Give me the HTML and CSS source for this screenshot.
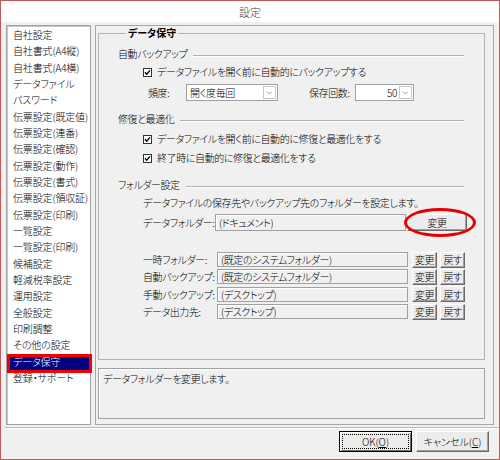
FILE: index.html
```html
<!DOCTYPE html>
<html lang="ja">
<head>
<meta charset="utf-8">
<title>設定</title>
<link rel="stylesheet" href="styles.css">
</head>
<body>
<div class="window">
  <div class="titlebar">設定</div>
  <div class="client">
    <div class="main">
      <ul class="nav">
        <li>自社設定</li>
        <li>自社書式(A4縦)</li>
        <li>自社書式(A4横)</li>
        <li>データファイル</li>
        <li>パスワード</li>
        <li>伝票設定(既定値)</li>
        <li>伝票設定(連番)</li>
        <li>伝票設定(確認)</li>
        <li>伝票設定(動作)</li>
        <li>伝票設定(書式)</li>
        <li>伝票設定(領収証)</li>
        <li>伝票設定(印刷)</li>
        <li>一覧設定</li>
        <li>一覧設定(印刷)</li>
        <li>候補設定</li>
        <li>軽減税率設定</li>
        <li>運用設定</li>
        <li>全般設定</li>
        <li>印刷調整</li>
        <li>その他の設定</li>
        <li class="selected">データ保守</li>
        <li>登録・サポート</li>
      </ul>
      <div class="pane">
        <fieldset class="group">
          <legend>データ保守</legend>
          <div class="heading h-backup"><span>自動バックアップ</span><i class="rule"></i></div>
          <div class="check c-backup"><svg class="box" width="9" height="9" viewBox="0 0 9 9"><rect x="0.5" y="0.5" width="8" height="8" fill="#fff" stroke="#333"/><polyline points="2,4.3 3.7,6.2 7,2.4" fill="none" stroke="#000" stroke-width="1.4"/></svg><span>データファイルを開く前に自動的にバックアップする</span></div>
          <div class="freq">
            <span class="lbl-freq">頻度:</span>
            <div class="combo combo-freq"><span class="val">開く度毎回</span><svg class="drop" width="13" height="13" viewBox="0 0 13 13"><rect x="0.5" y="0.5" width="12" height="12" fill="#fff" stroke="#c8c8c8"/><polyline points="4,5.5 6.5,8 9,5.5" fill="none" stroke="#9aa4b0" stroke-width="1"/></svg></div>
            <span class="lbl-count">保存回数:</span>
            <div class="combo combo-count"><span class="val num">50</span><svg class="drop" width="13" height="13" viewBox="0 0 13 13"><rect x="0.5" y="0.5" width="12" height="12" fill="#fff" stroke="#c8c8c8"/><polyline points="4,5.5 6.5,8 9,5.5" fill="none" stroke="#9aa4b0" stroke-width="1"/></svg></div>
          </div>
          <div class="heading h-repair"><span>修復と最適化</span><i class="rule"></i></div>
          <div class="check c-repair1"><svg class="box" width="9" height="9" viewBox="0 0 9 9"><rect x="0.5" y="0.5" width="8" height="8" fill="#fff" stroke="#333"/><polyline points="2,4.3 3.7,6.2 7,2.4" fill="none" stroke="#000" stroke-width="1.4"/></svg><span>データファイルを開く前に自動的に修復と最適化をする</span></div>
          <div class="check c-repair2"><svg class="box" width="9" height="9" viewBox="0 0 9 9"><rect x="0.5" y="0.5" width="8" height="8" fill="#fff" stroke="#333"/><polyline points="2,4.3 3.7,6.2 7,2.4" fill="none" stroke="#000" stroke-width="1.4"/></svg><span>終了時に自動的に修復と最適化をする</span></div>
          <div class="heading h-folder"><span>フォルダー設定</span><i class="rule"></i></div>
          <div class="note">データファイルの保存先やバックアップ先のフォルダーを設定します。</div>
          <div class="datafolder">
            <span class="lbl-df">データフォルダー:</span>
            <div class="field field-df">(ドキュメント)</div>
            <div class="circled"><button class="btn btn-df">変更</button></div>
          </div>
          <div class="folders">
            <div class="frow">
              <span class="lbl-f">一時フォルダー:</span>
              <div class="field field-f">(既定のシステムフォルダー)</div>
              <button class="btn btn-s">変更</button>
              <button class="btn btn-s">戻す</button>
            </div>
            <div class="frow">
              <span class="lbl-f">自動バックアップ:</span>
              <div class="field field-f">(既定のシステムフォルダー)</div>
              <button class="btn btn-s">変更</button>
              <button class="btn btn-s">戻す</button>
            </div>
            <div class="frow">
              <span class="lbl-f">手動バックアップ:</span>
              <div class="field field-f">(デスクトップ)</div>
              <button class="btn btn-s">変更</button>
              <button class="btn btn-s">戻す</button>
            </div>
            <div class="frow">
              <span class="lbl-f">データ出力先:</span>
              <div class="field field-f">(デスクトップ)</div>
              <button class="btn btn-s">変更</button>
              <button class="btn btn-s">戻す</button>
            </div>
          </div>
        </fieldset>
        <div class="desc">データフォルダーを変更します。</div>
      </div>
    </div>
    <div class="footer">
      <button class="btn btn-foot btn-ok"><span>OK(<u>O</u>)</span></button>
      <button class="btn btn-foot">キャンセル(<u>C</u>)</button>
    </div>
  </div>
</div>
</body>
</html>
```

FILE: styles.css
```css
html, body {
  margin: 0;
  padding: 0;
}

body {
  width: 500px;
  height: 460px;
  overflow: hidden;
  font-family: "Noto Sans CJK JP", "Noto Sans", sans-serif;
  font-size: 10px;
  font-weight: 300;
  font-feature-settings: "palt";
  color: #000;
}

.window {
  box-sizing: border-box;
  width: 500px;
  height: 460px;
  border: 1px solid #bf5a5a;
  background: #f0f0f0;
  display: flex;
  flex-direction: column;
}

.titlebar {
  height: 21px;
  line-height: 23px;
  background: #fff;
  text-align: center;
  font-size: 11px;
  color: #3c3c3c;
}

.client {
  flex: 1;
  display: flex;
  flex-direction: column;
}

.main {
  display: flex;
  padding: 3px 0 0 5px;
  height: 400px;
}

.nav {
  box-sizing: border-box;
  width: 85px;
  height: 400px;
  margin: 0;
  padding: 1px 0 0 0;
  list-style: none;
  background: #fff;
  border: 1px solid #a0a0a0;
  box-shadow: inset 1px 1px 0 #c8c8c8;
}

.nav li {
  height: 16.33px;
  line-height: 16.33px;
  padding-left: 6px;
  white-space: nowrap;
  letter-spacing: -0.15px;
}

.nav li.selected {
  position: relative;
  background: #000080;
  color: #fff;
}

.nav li.selected::after {
  content: "";
  position: absolute;
  top: 0;
  left: 0;
  right: -2px;
  bottom: -3px;
  border: 3px solid #f00000;
}

.pane {
  box-sizing: border-box;
  width: 399px;
  height: 400px;
  margin-left: 4px;
  border: 1px solid #a8a8a8;
  padding: 0 0 0 2px;
  letter-spacing: -0.4px;
}

.group {
  box-sizing: border-box;
  width: 387px;
  height: 334px;
  margin: 0;
  padding: 0 17px 0 19px;
  min-width: 0;
  border: 1px solid #b4b4b4;
}

.group legend {
  font-weight: bold;
  line-height: 14px;
  padding: 0 2px;
  margin-left: 8px;
  letter-spacing: 0;
}

.heading {
  display: flex;
  align-items: center;
  height: 16px;
  line-height: 16px;
}

.heading .rule {
  flex: 1;
  height: 0;
  margin: 3px 3px 0 6px;
  border-top: 1px solid #b0b0b0;
  border-bottom: 1px solid #fff;
}

.h-backup { margin-top: 6px; }
.h-repair { margin-top: 10px; }
.h-folder { margin-top: 11px; }

.check {
  display: flex;
  align-items: center;
  height: 16px;
  line-height: 16px;
  padding-left: 25px;
}

.check .box {
  flex-shrink: 0;
  margin-right: 5px;
}

.c-backup { margin-top: 2px; }
.c-repair1 { margin-top: 4px; }
.c-repair2 { margin-top: 3px; }

.freq {
  display: flex;
  align-items: center;
  height: 17px;
  margin-top: 4px;
  padding-left: 30px;
}

.lbl-freq {
  width: 38px;
  flex-shrink: 0;
}

.lbl-count {
  width: 46px;
  margin-left: 31px;
  flex-shrink: 0;
}

.combo {
  box-sizing: border-box;
  height: 17px;
  display: flex;
  align-items: center;
  background: #fff;
  border: 1px solid #a0a0a0;
  flex-shrink: 0;
}

.combo .val {
  flex: 1;
  padding-left: 3px;
  line-height: 15px;
}

.combo .val.num {
  text-align: right;
  padding-right: 2px;
}

.combo .drop {
  flex-shrink: 0;
  margin-right: 1px;
}

.combo-freq { width: 92px; }
.combo-count { width: 59px; }

.note {
  height: 16px;
  line-height: 16px;
  margin-top: 2px;
  padding-left: 25px;
  white-space: nowrap;
}

.datafolder {
  display: flex;
  align-items: center;
  height: 17px;
  margin-top: 3px;
  padding-left: 25px;
}

.lbl-df {
  width: 72px;
  flex-shrink: 0;
  white-space: nowrap;
}

.field {
  box-sizing: border-box;
  flex-shrink: 0;
  background: #f0f0f0;
  border: 1px solid #a0a0a0;
  box-shadow: inset 1px 1px 0 #fff;
  padding-left: 3px;
  white-space: nowrap;
  overflow: hidden;
}

.field-df {
  width: 191px;
  height: 17px;
  line-height: 15px;
}

.circled {
  position: relative;
  margin-left: 1px;
  flex-shrink: 0;
}

.circled::after {
  content: "";
  position: absolute;
  top: -6px;
  left: -3px;
  right: -9px;
  bottom: -6px;
  border: 3px solid #e80000;
  border-radius: 50%;
}

.btn {
  box-sizing: border-box;
  margin: 0;
  padding: 0;
  font: inherit;
  letter-spacing: inherit;
  color: #000;
  background: #ececec;
  border: 1px solid;
  border-color: #fff #6b6b6b #6b6b6b #fff;
  box-shadow: inset -1px -1px 0 #a0a0a0;
  text-align: center;
  flex-shrink: 0;
}

.btn-df {
  display: block;
  width: 60px;
  height: 17px;
  line-height: 14px;
}

.folders {
  margin-top: 21px;
  padding-left: 25px;
  display: flex;
  flex-direction: column;
  gap: 2.4px;
}

.frow {
  display: flex;
  align-items: center;
  height: 15px;
}

.lbl-f {
  width: 74px;
  flex-shrink: 0;
  white-space: nowrap;
}

.field-f {
  width: 191px;
  height: 15px;
  line-height: 13px;
}

.btn-s {
  width: 25px;
  height: 16px;
  line-height: 13px;
  margin-left: 4px;
}

.btn-s + .btn-s {
  margin-left: 3px;
}

.desc {
  box-sizing: border-box;
  width: 387px;
  height: 51px;
  margin-top: 8px;
  padding: 2px 4px;
  line-height: 16px;
  border: 1px solid #a0a0a0;
  box-shadow: inset 1px 1px 0 #fff;
}

.footer {
  display: flex;
  justify-content: flex-end;
  gap: 4px;
  margin: 2px 0 0 4px;
  padding: 3px 10px 0 0;
  border-top: 1px solid #b9b9b9;
  box-shadow: inset 0 1px 0 #fff;
  flex: 1;
  align-items: flex-start;
}

.btn-foot {
  width: 73px;
  height: 21px;
  line-height: 18px;
  letter-spacing: 0;
}

.btn-ok {
  border-color: #000;
  box-shadow: inset 1px 1px 0 #fff, inset -1px -1px 0 #6b6b6b;
  padding: 2px;
}

.btn-ok span {
  display: block;
  height: 15px;
  line-height: 14px;
  border: 1px dotted #000;
  box-sizing: border-box;
}
```
